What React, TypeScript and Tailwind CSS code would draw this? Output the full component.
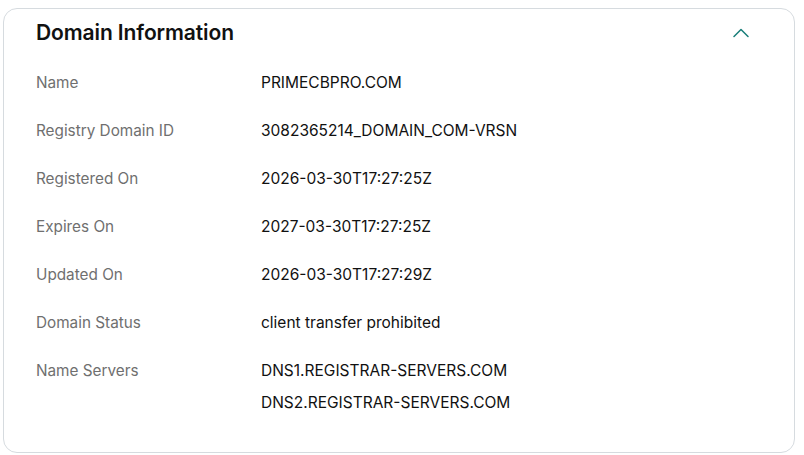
import { ChevronUp } from 'lucide-react';

const rows: { label: string; values: string[] }[] = [
  { label: 'Name', values: ['PRIMECBPRO.COM'] },
  { label: 'Registry Domain ID', values: ['3082365214_DOMAIN_COM-VRSN'] },
  { label: 'Registered On', values: ['2026-03-30T17:27:25Z'] },
  { label: 'Expires On', values: ['2027-03-30T17:27:25Z'] },
  { label: 'Updated On', values: ['2026-03-30T17:27:29Z'] },
  { label: 'Domain Status', values: ['client transfer prohibited'] },
  { label: 'Name Servers', values: ['DNS1.REGISTRAR-SERVERS.COM', 'DNS2.REGISTRAR-SERVERS.COM'] },
];

export default function App() {
  return (
    <div className="h-[455px] w-[804px] bg-white pl-[3px] pt-[8px] font-['Inter',sans-serif]">
      <div className="h-[445px] w-[792px] rounded-[14px] border border-[#d6dbdf] bg-white pl-[32px] pr-[40px] pt-[12px]">
        <div className="flex h-[24px] items-center justify-between">
          <h2 className="text-[21px] font-semibold tracking-[-0.1px] text-[#111111]">Domain Information</h2>
          <ChevronUp size={28} strokeWidth={1.3} className="-mr-[1px] text-[#1b7f7a]" />
        </div>
        <div className="mt-[14px]">
          {rows.map((row) => (
            <div key={row.label} className="grid grid-cols-[225px_1fr]">
              <div className="flex h-[48px] items-center text-[15.3px] text-[#6f6f6f]">{row.label}</div>
              <div className="flex flex-col text-[15.5px]">
                {row.values.map((v, i) => (
                  <div
                    key={v}
                    className={`flex items-center text-[#111111] ${i === 0 ? 'h-[48px]' : 'h-[16px]'}`}
                  >
                    {v}
                  </div>
                ))}
              </div>
            </div>
          ))}
        </div>
      </div>
    </div>
  );
}
